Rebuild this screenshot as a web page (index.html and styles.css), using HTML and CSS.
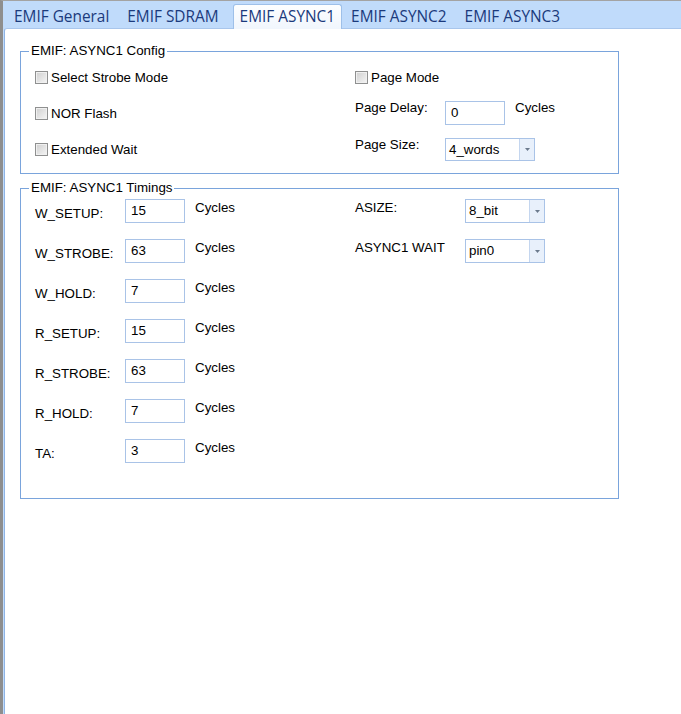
FILE: index.html
```html
<!DOCTYPE html>
<html>
<head>
<meta charset="utf-8">
<link rel="stylesheet" href="styles.css">
</head>
<body>
<div class="app">
  <div class="tabbar">
    <div class="tab">EMIF General</div>
    <div class="tab">EMIF SDRAM</div>
    <div class="tab active">EMIF ASYNC1</div>
    <div class="tab">EMIF ASYNC2</div>
    <div class="tab">EMIF ASYNC3</div>
  </div>
  <div class="panel">
    <fieldset class="group g1">
      <legend>EMIF: ASYNC1 Config</legend>
      <div class="cols">
        <div class="col left">
          <div class="row crow"><span class="box"></span><span class="clabel">Select Strobe Mode</span></div>
          <div class="row crow"><span class="box"></span><span class="clabel">NOR Flash</span></div>
          <div class="row crow"><span class="box"></span><span class="clabel">Extended Wait</span></div>
        </div>
        <div class="col right">
          <div class="row crow"><span class="box"></span><span class="clabel">Page Mode</span></div>
          <div class="row prow">
            <span class="plabel">Page Delay:</span>
            <div class="field">0</div>
            <span class="unit">Cycles</span>
          </div>
          <div class="row srow">
            <span class="plabel">Page Size:</span>
            <div class="combo w90"><span class="val">4_words</span><span class="btn"><svg width="5" height="3" viewBox="0 0 5 3"><path d="M0 0H5L2.5 3Z" fill="#6b7a8d"/></svg></span></div>
          </div>
        </div>
      </div>
    </fieldset>

    <fieldset class="group g2">
      <legend>EMIF: ASYNC1 Timings</legend>
      <div class="cols">
        <div class="col left">
          <div class="row trow"><span class="tlabel">W_SETUP:</span><div class="field">15</div><span class="tunit">Cycles</span></div>
          <div class="row trow"><span class="tlabel">W_STROBE:</span><div class="field">63</div><span class="tunit">Cycles</span></div>
          <div class="row trow"><span class="tlabel">W_HOLD:</span><div class="field">7</div><span class="tunit">Cycles</span></div>
          <div class="row trow"><span class="tlabel">R_SETUP:</span><div class="field">15</div><span class="tunit">Cycles</span></div>
          <div class="row trow"><span class="tlabel">R_STROBE:</span><div class="field">63</div><span class="tunit">Cycles</span></div>
          <div class="row trow"><span class="tlabel">R_HOLD:</span><div class="field">7</div><span class="tunit">Cycles</span></div>
          <div class="row trow"><span class="tlabel">TA:</span><div class="field">3</div><span class="tunit">Cycles</span></div>
        </div>
        <div class="col right">
          <div class="row trow"><span class="alabel">ASIZE:</span><div class="combo w80"><span class="val">8_bit</span><span class="btn"><svg width="5" height="3" viewBox="0 0 5 3"><path d="M0 0H5L2.5 3Z" fill="#6b7a8d"/></svg></span></div></div>
          <div class="row trow"><span class="alabel">ASYNC1 WAIT</span><div class="combo w80"><span class="val">pin0</span><span class="btn"><svg width="5" height="3" viewBox="0 0 5 3"><path d="M0 0H5L2.5 3Z" fill="#6b7a8d"/></svg></span></div></div>
        </div>
      </div>
    </fieldset>
  </div>
</div>
</body>
</html>
```

FILE: styles.css
```css
* { box-sizing: border-box; }
html, body { margin: 0; padding: 0; }
body {
  width: 681px;
  height: 714px;
  overflow: hidden;
  background: #fff;
  font-family: "Liberation Sans", Arial, sans-serif;
  font-size: 13.33px;
  color: #000;
}
.app {
  height: 714px;
  display: flex;
  flex-direction: column;
  border-top: 1px solid #a3a3a3;
  border-left: 3px solid #8e8e8e;
  background: #c0dbfb;
}
.tabbar {
  height: 27px;
  flex: none;
  display: flex;
  align-items: flex-end;
  padding-left: 2px;
  font-family: "Open Sans", sans-serif;
  font-size: 15.4px;
  color: #1b3a7c;
}
.tab {
  height: 24px;
  line-height: 23px;
  padding: 0 8px;
  border: 1px solid transparent;
  border-bottom: none;
  white-space: nowrap;
}
.tab.active {
  height: 25px;
  margin-left: 5px;
  margin-bottom: -1px;
  padding: 0 6px;
  background: linear-gradient(#fdfeff, #f1f6fd);
  border-color: #9ec0e9;
  border-radius: 3px 3px 0 0;
  position: relative;
  z-index: 1;
}
.panel {
  flex: 1;
  margin-left: 1px;
  background: #fff;
  border-top: 1px solid #a9c6ec;
  border-left: 1px solid #8fb3e3;
  border-top-left-radius: 3px;
  padding: 14px 0 0 15px;
}
.group {
  margin: 0;
  padding: 0 0 0 14px;
  width: 599px;
  min-width: 0;
  border: 1px solid #7aa4dc;
}
.group legend {
  margin-left: -6px;
  padding: 0 2px;
  line-height: 16px;
  color: #000;
}
.g1 { padding-bottom: 6px; }
.g2 { margin-top: 6px; padding-bottom: 19px; }
.g2 .cols { padding-top: 3px; }
.cols { display: flex; }
.col.left { width: 320px; flex: none; }
.col.right { flex: 1; }
.row { display: flex; align-items: flex-start; line-height: 16px; white-space: nowrap; }
.g1 .row { height: 36px; }
.g2 .row { height: 40px; }

.box {
  width: 13px;
  height: 13px;
  margin-top: 12px;
  margin-right: 3px;
  border: 1px solid #8f9090;
  background: linear-gradient(135deg, #cfcfcf, #f5f5f5);
  box-shadow: inset 0 0 0 1px #f0f0f0;
  flex: none;
}
.clabel { padding-top: 11px; }

.plabel { width: 90px; padding-top: 5px; flex: none; }
.prow .field { margin-top: 6px; }
.unit { margin-left: 10px; padding-top: 5px; }
.srow .plabel { padding-top: 6px; }
.srow .combo { margin-top: 7px; height: 23px; }

.field {
  width: 60px;
  height: 24px;
  flex: none;
  border: 1px solid #a9c3e7;
  padding: 0 5px;
  line-height: 22px;
  background: #fff;
}
.combo {
  display: flex;
  height: 24px;
  flex: none;
  border: 1px solid #a9c3e7;
  background: #fff;
}
.combo.w90 { width: 90px; }
.combo.w80 { width: 80px; }
.combo .val { flex: 1; padding-left: 3px; line-height: 22px; }
.combo .btn {
  width: 15px;
  border-left: 1px solid #c4d6ef;
  background: #e8f0fb;
  display: flex;
  align-items: center;
  justify-content: center;
}
.combo .btn svg { display: block; }

.tlabel { width: 90px; padding-top: 7px; flex: none; }
.tunit { margin-left: 10px; padding-top: 1px; }
.alabel { width: 110px; padding-top: 1px; flex: none; }
```
